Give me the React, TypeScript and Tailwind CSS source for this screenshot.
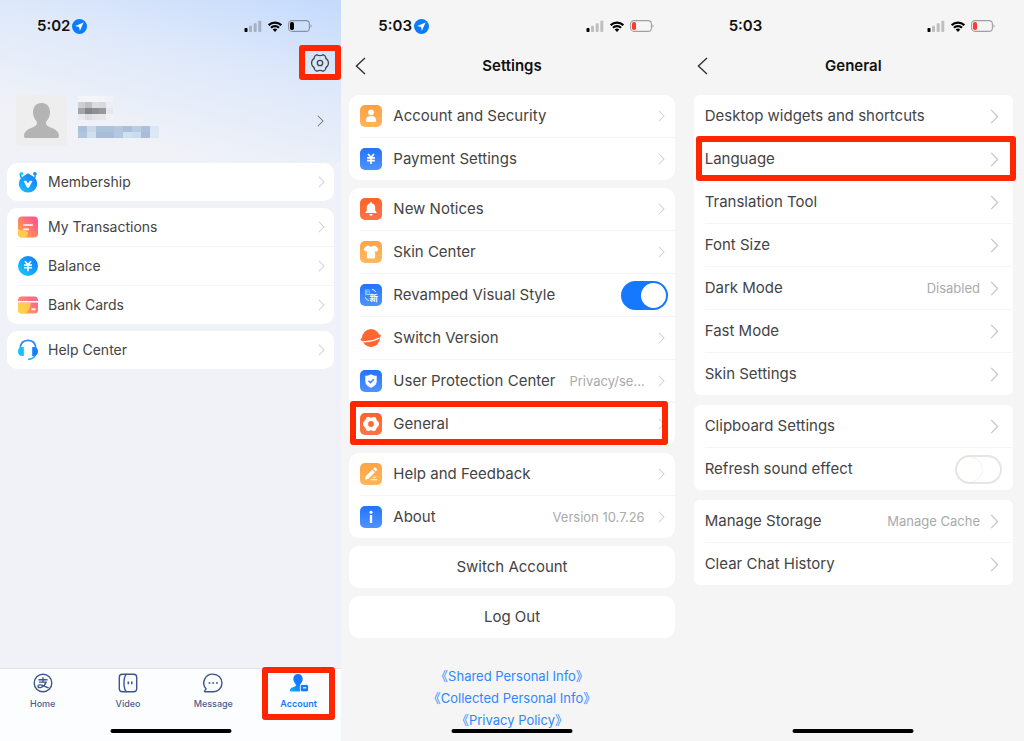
import React, { useState } from 'react';

type Status = { time: string; located?: boolean; low?: boolean };

const StatusBar = ({ time, located, low }: Status) => (
    <div className="flex items-center justify-between pt-4 pl-[37px] pr-[29px] h-9">
        <div className={`flex items-center gap-[2px] text-[15px] leading-5 font-semibold text-[#111] ${located ? '' : 'pl-[9px]'}`}>
            <span>{time}</span>
            {located && (
                <svg className="w-[15px] h-[15px]" viewBox="0 0 15 15">
                    <circle cx="7.5" cy="7.5" r="7.5" fill="#0a7cff" />
                    <path d="M11.6 3.5 3.2 7.1l3.8.9.9 3.8z" fill="#fff" />
                </svg>
            )}
        </div>
        <div className="flex items-center gap-[6px]">
            <svg className="w-[18px] h-3" viewBox="0 0 18 12">
                <rect x="0.5" y="8" width="3" height="4" rx="0.8" fill="#000" />
                <rect x="5" y="5.8" width="3" height="6.2" rx="0.8" fill="#000" opacity="0.22" />
                <rect x="9.7" y="3.2" width="3" height="8.8" rx="0.8" fill="#000" opacity="0.22" />
                <rect x="14.3" y="0.8" width="3" height="11.2" rx="0.8" fill="#000" opacity="0.22" />
            </svg>
            <svg className="w-[14px] h-[11px]" viewBox="0 0 14 11" fill="none" stroke="#000" strokeWidth="2.2">
                <path d="M0.7 4.1a9 9 0 0 1 12.6 0" />
                <path d="M3 6.8a5.6 5.6 0 0 1 8 0" />
                <path d="M7 11 4.7 8.600a3.200 3.200 0 0 1 4.600 0z" fill="#000" stroke="none" />
            </svg>
            <svg className="w-6 h-3" viewBox="0 0 24 12">
                <rect x="0.6" y="0.6" width="20.8" height="10.8" rx="3.4" fill="none" stroke="#000" strokeOpacity="0.35" strokeWidth="1.1" />
                <rect x="2" y="2" width="4" height="8" rx="1.8" fill={low ? '#ff3b30' : '#000'} />
                <path d="M22.6 4.2v3.6c1.2-.5 1.2-3.1 0-3.6z" fill="#000" opacity="0.4" />
            </svg>
        </div>
    </div>
);

const Arrow = ({ className }: { className: string }) => (
    <svg className={`shrink-0 ${className}`} viewBox="0 0 7 13" fill="none" stroke="currentColor" strokeWidth="1.1">
        <path d="M0.6 0.8 6.2 6.5 0.6 12.2" />
    </svg>
);

const Highlight = ({ className }: { className: string }) => (
    <span className={`absolute z-10 border-6 border-[#ff2600] rounded-[3px] pointer-events-none ${className}`} />
);

const HomeBar = () => (
    <div className="absolute bottom-2 left-1/2 -translate-x-1/2 w-[121px] h-1 rounded-full bg-black" />
);

const NavBar = ({ title }: { title: string }) => (
    <header className="grid grid-cols-[1fr_auto_1fr] items-center h-[59px] px-[14px]">
        <button aria-label="Back" className="justify-self-start">
            <svg className="w-[11px] h-[18px]" viewBox="0 0 11 18" fill="none" stroke="#333" strokeWidth="1.4">
                <path d="M10 1 1.4 9 10 17" />
            </svg>
        </button>
        <h1 className="text-[15px] leading-6 font-semibold text-[#111]">{title}</h1>
    </header>
);

const Tile = ({ from, to, children }: { from: string; to: string; children: React.ReactNode }) => {
    const id = React.useId();
    return (
        <svg className="w-[22px] h-[22px] shrink-0" viewBox="0 0 22 22">
            <defs>
                <linearGradient id={id} x1="0" y1="0" x2="0" y2="1">
                    <stop offset="0" stopColor={from} />
                    <stop offset="1" stopColor={to} />
                </linearGradient>
            </defs>
            <rect width="22" height="22" rx="5" fill={`url(#${id})`} />
            {children}
        </svg>
    );
};

const Yen = ({ x, y }: { x: number; y: number }) => (
    <path
        transform={`translate(${x} ${y})`}
        d="M-3-4.8 0-1.4 3-4.8M-3.9-.9h7.8M-3.9 1.8h7.8M0-1.4V5.2"
        fill="none"
        stroke="#fff"
        strokeWidth="1.6"
    />
);

const icons: Record<string, React.ReactNode> = {
    person: (
        <Tile from="#ffa043" to="#ffb65c">
            <circle cx="11" cy="7.3" r="2.9" fill="#fff" />
            <path d="M6 15.2c0-3 2.3-4.2 5-4.2s5 1.2 5 4.2c0 1.5-.8 1.8-1.8 1.8H7.8c-1 0-1.8-.3-1.8-1.8z" fill="#fff" />
        </Tile>
    ),
    yen: <Tile from="#2473ff" to="#4f93ff"><Yen x={11} y={10.8} /></Tile>,
    bell: (
        <Tile from="#ff6229" to="#ff7445">
            <path d="M11 4.3c.8 0 1.2.5 1.2 1.1 2 .5 3 2 3 4v3.300l1.500 1.800v.6H5.300v-.6l1.500-1.800V9.400c0-2 1-3.500 3-4 0-.6.400-1.100 1.200-1.100z" fill="#fff" />
            <path d="M9.300 16h3.400a1.700 1.700 0 0 1-3.400 0z" fill="#fff" />
        </Tile>
    ),
    shirt: (
        <Tile from="#ffa445" to="#ffb960">
            <path d="M8 4.600c1.200 1.500 4.800 1.500 6 0l2.400.8 2.200 3.400-2.300 2-1.200-.7v6.200c0 .7-.4 1.200-1.100 1.200H8c-.7 0-1.100-.5-1.100-1.200v-6.200l-1.200.7-2.300-2 2.200-3.400z" fill="#fff" />
        </Tile>
    ),
    revamp: (
        <Tile from="#2473ff" to="#4f93ff">
            <text x="4.600" y="9.600" fontSize="5.500" fill="#fff" fontFamily="Noto Sans CJK SC, sans-serif">旧</text>
            <text x="9.400" y="17" fontSize="8.500" fontWeight="700" fill="#fff" fontFamily="Noto Sans CJK SC, sans-serif">新</text>
            <path d="M12 5.500c1.800.2 3.200 1.200 3.800 2.600M5.400 13.400c.5 1.600 1.700 2.700 3.400 3" fill="none" stroke="#fff" />
        </Tile>
    ),
    planet: (
        <svg className="w-[22px] h-[22px] shrink-0" viewBox="0 0 22 22">
            <circle cx="11" cy="11" r="9" fill="#ff6632" />
            <path d="M2 12.600 20.400 7.400c1 .9.300 2.300-1.200 3.100-4 2.400-11.500 4.400-16.400 3.600-2-.3-2.700-1-2-2.300.4-.7 1-1.300 2-1.900z" fill="#ff6632" />
            <path d="M3.500 14.600c5.500.4 11-1 15.800-3.600" fill="none" stroke="#fff" strokeWidth="1.200" />
        </svg>
    ),
    shield: (
        <Tile from="#2473ff" to="#4f93ff">
            <path d="M11 4.200c2 1.100 3.700 1.500 5.700 1.600v5.700c0 3-2.500 4.800-5.700 6.200-3.200-1.400-5.700-3.200-5.700-6.200V5.800C7.300 5.700 9 5.300 11 4.200z" fill="#fff" />
            <path d="m8.500 10.700 2 1.900 3.300-3.400" fill="none" stroke="#3a82ff" strokeWidth="1.500" />
        </Tile>
    ),
    gear: (
        <Tile from="#ff6229" to="#ff7445">
            <path d="M7.500 4.100h1.600q1.900 1.100 3.800 0h1.600q1.300.4 1.700 1.600.1 1.700 1.700 2.500 1.100 1.300 1.100 2.800t-1.100 2.800q-1.600.8-1.700 2.500-.4 1.200-1.700 1.600h-1.600q-1.900-1.100-3.800 0H7.500q-1.300-.4-1.700-1.600-.1-1.700-1.700-2.500Q3 12.500 3 11t1.100-2.800q1.600-.8 1.700-2.500.4-1.200 1.700-1.600z" fill="#fff" />
            <circle cx="11" cy="11" r="2.900" fill="#ff6b38" />
        </Tile>
    ),
    pen: (
        <Tile from="#ffa445" to="#ffb65c">
            <path d="m5 16.800.9-3.700 6.400-6.400 2.600 2.600-6.400 6.500z" fill="#fff" />
            <path d="m13.200 5.800.8-.8c.7-.6 1.300-.6 1.900 0l.7.7c.6.6.6 1.300 0 1.900l-.8.800z" fill="#fff" />
            <path d="M12.800 14.200h3.300M10.700 16.700h6.200" stroke="#fff" strokeWidth="1.100" />
        </Tile>
    ),
    info: (
        <Tile from="#2473ff" to="#4f93ff">
            <circle cx="11" cy="6.300" r="1.500" fill="#fff" />
            <path d="M11 9v8" stroke="#fff" strokeWidth="2.300" />
        </Tile>
    ),
    member: (
        <svg className="w-5 h-[22px] shrink-0" viewBox="0 0 20 22">
            <defs>
                <linearGradient id="member" x1="0" y1="1" x2="1" y2="0">
                    <stop offset="0" stopColor="#16c4fd" />
                    <stop offset="1" stopColor="#1776ff" />
                </linearGradient>
            </defs>
            <path d="m10 2.300 4.800 3a9 9 0 0 1 4.400 7.600 9.200 8.700 0 0 1-18.400 0 9 9 0 0 1 4.400-7.600z" fill="url(#member)" />
            <path d="M3.200 7C3 5.200 2.600 4 2 2.600M16.800 7c.2-1.800.6-3 1.200-4.400" stroke="#16a4fe" strokeWidth="1.600" fill="none" />
            <ellipse cx="3.600" cy="2.500" rx="1.700" ry="1.500" fill="#12d4f6" />
            <ellipse cx="16.800" cy="2.500" rx="1.700" ry="1.500" fill="#1f80ff" />
            <path d="m5.600 10 2.600-.2 1.800 2.600 1.800-2.600 2.600.2-3.200 6.300c-.6 1-1.800 1-2.400 0z" fill="#fff" />
        </svg>
    ),
    transactions: (
        <svg className="w-5 h-[22px] shrink-0" viewBox="0 0 20 22">
            <defs>
                <linearGradient id="bill" x1="0" y1="1" x2="1" y2="0">
                    <stop offset="0.1" stopColor="#ffa63f" />
                    <stop offset="0.8" stopColor="#ff5c88" />
                </linearGradient>
            </defs>
            <rect x="0" y="0.500" width="20" height="21" rx="4" fill="url(#bill)" />
            <path d="M0 13c3.500 2 7 1 10 3 .5 2-1 4.500-3 5.500H4a4 4 0 0 1-4-4z" fill="#ffd84a" opacity="0.8" />
            <path d="M5.300 9h9.500M5.300 13.300h5.600" stroke="#fff" strokeWidth="1.700" />
        </svg>
    ),
    balance: (
        <svg className="w-5 h-[22px] shrink-0" viewBox="0 0 20 20">
            <defs>
                <linearGradient id="balance" x1="0" y1="1" x2="1" y2="0">
                    <stop offset="0" stopColor="#12d3fc" />
                    <stop offset="1" stopColor="#1671ff" />
                </linearGradient>
            </defs>
            <circle cx="10" cy="10" r="10" fill="url(#balance)" />
            <Yen x={10} y={10} />
        </svg>
    ),
    cards: (
        <svg className="w-5 h-5 shrink-0" viewBox="0 0 20 20">
            <defs>
                <linearGradient id="cards" x1="0" y1="1" x2="1" y2="0">
                    <stop offset="0.1" stopColor="#ffb13f" />
                    <stop offset="0.7" stopColor="#ff6c83" />
                </linearGradient>
            </defs>
            <rect x="0" y="1.500" width="20" height="17" rx="3.500" fill="url(#cards)" />
            <path d="M0 8h13c-1 4-2 8-6 10.500H3.500A3.500 3.500 0 0 1 0 15z" fill="#ffdf4c" opacity="0.75" />
            <path d="M0 6.800h20" stroke="#fff" strokeWidth="1.500" />
            <path d="M13.500 14.300h4" stroke="#fff" strokeWidth="1.800" />
        </svg>
    ),
    help: (
        <svg className="w-5 h-[22px] shrink-0" viewBox="0 0 20 22">
            <path d="M2 11C2 5 5 1.400 10 1.400S18 5 18 11" fill="none" stroke="#2b8cff" strokeWidth="1.700" />
            <path d="M17.300 15.500c-.8 3-3.400 4.500-6.600 4.800" fill="none" stroke="#1cbafd" strokeWidth="1.700" strokeLinecap="round" />
            <path d="M5.800 8.200v8.700c-3.500.6-5.800-1-5.800-4.300s2.300-5 5.800-4.400z" fill="#14bffd" />
            <path d="M14.200 8.200v8.700c3.500.6 5.800-1 5.800-4.300s-2.300-5-5.800-4.400z" fill="#1a7dff" />
        </svg>
    ),
};

type Item = {
    label: string;
    icon?: string;
    value?: string;
    toggle?: boolean;
    highlight?: string;
};

type Variant = 'account' | 'settings' | 'general';

const Toggle = ({ id, on }: { id: string; on: boolean }) => {
    const [checked, setChecked] = useState(on);
    return (
        <input
            id={id}
            type="checkbox"
            role="switch"
            checked={checked}
            onChange={() => setChecked(!checked)}
            className="relative appearance-none shrink-0 w-[47px] h-[29px] -mr-[3px] rounded-full border-2 border-[#e6e6e6] bg-white checked:bg-[#1677ff] checked:border-[#1677ff] before:absolute before:top-0 before:left-0 before:w-[25px] before:h-[25px] before:rounded-full before:bg-[#fffffd] before:shadow-[0_0_1px_#ccc] checked:before:left-[18px] checked:before:shadow-none"
        />
    );
};

const Row = ({ item, variant }: { item: Item; variant: Variant }) => {
    const { label, icon, value, toggle, highlight } = item;
    const sizes = {
        account: 'h-[38px] pr-[9px] text-[14px]',
        settings: 'h-[42px] pr-[10px] text-[15px]',
        general: 'h-[42px] pr-[14px] text-[15px]',
    };
    const base = `flex items-center w-full text-left leading-5 text-[#444] ${sizes[variant]}`;

    if (toggle !== undefined) {
        const id = label.replace(/ /g, '-').toLowerCase();
        return (
            <div className={base}>
                {icon && <span className="mr-[11px]">{icons[icon]}</span>}
                <label htmlFor={id} className="flex-1">{label}</label>
                <Toggle id={id} on={toggle} />
            </div>
        );
    }

    return (
        <button className={base}>
            {icon && <span className={variant === 'account' ? 'mr-[10px]' : 'mr-[11px]'}>{icons[icon]}</span>}
            <span className="flex-1 whitespace-nowrap">{label}</span>
            {value && (
                <span className={`text-[13px] text-[#aaa] ${variant === 'general' ? 'mr-[10px]' : 'mr-[13px]'}`}>{value}</span>
            )}
            <Arrow className={variant === 'general' ? 'w-[9px] h-[15px] text-[#c8c8c8]' : 'w-[7px] h-[12px] text-[#cfcfcf]'} />
            {highlight && <Highlight className={highlight} />}
        </button>
    );
};

const Card = ({ items, variant }: { items: Item[]; variant: Variant }) => (
    <ul className={`bg-white pl-[11px] divide-y divide-[#f5f5f5] ${variant === 'general' ? 'rounded-md' : 'rounded-[10px]'}`}>
        {items.map((item) => (
            <li key={item.label} className={item.highlight ? 'relative' : ''}>
                <Row item={item} variant={variant} />
            </li>
        ))}
    </ul>
);

const accountGroups: Item[][] = [
    [{ label: 'Membership', icon: 'member' }],
    [
        { label: 'My Transactions', icon: 'transactions' },
        { label: 'Balance', icon: 'balance' },
        { label: 'Bank Cards', icon: 'cards' },
    ],
    [{ label: 'Help Center', icon: 'help' }],
];

const settingsGroups: Item[][] = [
    [
        { label: 'Account and Security', icon: 'person' },
        { label: 'Payment Settings', icon: 'yen' },
    ],
    [
        { label: 'New Notices', icon: 'bell' },
        { label: 'Skin Center', icon: 'shirt' },
        { label: 'Revamped Visual Style', icon: 'revamp', toggle: true },
        { label: 'Switch Version', icon: 'planet' },
        { label: 'User Protection Center', icon: 'shield', value: 'Privacy/se...' },
        { label: 'General', icon: 'gear', highlight: '-top-[2px] bottom-0 -left-[10px] right-[7px]' },
    ],
    [
        { label: 'Help and Feedback', icon: 'pen' },
        { label: 'About', icon: 'info', value: 'Version 10.7.26' },
    ],
];

const generalGroups: Item[][] = [
    [
        { label: 'Desktop widgets and shortcuts' },
        { label: 'Language', highlight: '-top-[2px] -bottom-px -left-[9px] -right-[3px]' },
        { label: 'Translation Tool' },
        { label: 'Font Size' },
        { label: 'Dark Mode', value: 'Disabled' },
        { label: 'Fast Mode' },
        { label: 'Skin Settings' },
    ],
    [{ label: 'Clipboard Settings' }, { label: 'Refresh sound effect', toggle: false }],
    [{ label: 'Manage Storage', value: 'Manage Cache' }, { label: 'Clear Chat History' }],
];

// Pixelated name and phone number
const nameRows = [
    ['#f3f5f9', '#f3f5f9', '#f3f5f9', '#f1f4f9', '#eef2f9'],
    ['#cfd0d4', '#bfc0c4', '#dcdde1', '#d8d9dd', '#eceef2'],
    ['#a5a5a8', '#858588', '#909093', '#98989b', '#e6e8ed'],
    ['#e9eaee', '#dcdde1', '#e4e5e9', '#e6e7eb', '#f0f2f7'],
];
const phoneRows = [
    ['#adc0da', '#c9d9e9', '#adc2dc', '#adc2dc', '#b4c7de', '#a9bfda', '#b9cce2', '#adc0da', '#dbe8f4'],
    ['#b0c4dd', '#d0dfec', '#a9bdd8', '#a9bdd8', '#b4c8df', '#cfe0ef', '#c9dcec', '#a9bdd8', '#dce9f5'],
];

const Mosaic = ({ rows, cell }: { rows: string[][]; cell: string }) => (
    <div>
        {rows.map((row, r) => (
            <div key={r} className="flex">
                {row.map((color, c) => (
                    <span key={c} className={cell} style={{ backgroundColor: color }} />
                ))}
            </div>
        ))}
    </div>
);

const tabs = [
    {
        label: 'Home',
        icon: (
            <svg className="w-5 h-5" viewBox="0 0 20 20" fill="none" stroke="#3d5590" strokeWidth="1.4">
                <circle cx="10" cy="10" r="8.800" />
                <path d="M5.500 6.700h9M10 4.200v4.600M6 9.100h7.200c-.8 2.300-2.500 4.400-5 5.300-2.200.7-3.400-.2-3.200-1.300.3-1.400 2.600-1.600 4.700-.7 1.800.7 3.500 1.600 6 2.500" />
            </svg>
        ),
    },
    {
        label: 'Video',
        icon: (
            <svg className="w-5 h-5" viewBox="0 0 20 20" fill="none" stroke="#3d5590" strokeWidth="1.4">
                <path d="M8.500 1.200H4.300A3 3 0 0 0 1.300 4.200v11.600a3 3 0 0 0 3 3h4.200" />
                <path d="M8.500 1.200h7.200a3 3 0 0 1 3 3v11.600a3 3 0 0 1-3 3H8.500c-1.700-1.300-2.500-4.500-2.500-8.800s.8-7.500 2.500-8.800z" />
                <path d="M10.300 8.500v2.700M13.800 8.500v2.700" strokeWidth="1.500" />
            </svg>
        ),
    },
    {
        label: 'Message',
        icon: (
            <svg className="w-5 h-5" viewBox="0 0 20 20" fill="none" stroke="#3d5590" strokeWidth="1.4">
                <path d="M10.200 1.200a8.800 8.800 0 1 1 0 17.600H2.300c-.8 0-1-.6-.5-1.200l1.300-1.700A8.800 8.800 0 0 1 10.200 1.200z" />
                <path d="M5.600 10h1.800M9.300 10h1.800M13 10h1.800" strokeWidth="1.700" />
            </svg>
        ),
    },
    {
        label: 'Account',
        active: true,
        icon: (
            <svg className="w-5 h-5" viewBox="0 0 20 20">
                <defs>
                    <linearGradient id="me" x1="0" y1="1" x2="1" y2="0">
                        <stop offset="0" stopColor="#0cb2ff" />
                        <stop offset="0.6" stopColor="#1677ff" />
                    </linearGradient>
                </defs>
                <path d="M9 1c3 0 4.700 2.100 4.700 5 0 2.100-1 3.800-2.200 5-.3 1.600 0 2.200-.5 3V18.500H2.200c-1.500 0-1.800-1.200-1-2.500 1.200-1.900 5.300-2.300 5.600-3.300.1-.7 0-1.100-.3-1.700C5.300 9.800 4.300 8.100 4.300 6 4.300 3.100 6 1 9 1z" fill="url(#me)" />
                <rect x="11.300" y="11.500" width="8.200" height="7.300" rx="1.800" fill="#1677ff" stroke="#fff" strokeWidth="0.8" />
                <path d="M14 14.800h3.200" stroke="#fff" strokeWidth="1.200" />
            </svg>
        ),
    },
];

const AccountScreen = () => (
    <section className="relative flex flex-col min-h-screen bg-[#f0f2f7]">
        <div className="bg-[linear-gradient(195deg,#c4dafc_0%,#dfe9fa_38%,#f0f2f7_78%)]">
            <StatusBar time="5:02" located />
            <div className="flex justify-end pt-[9px]">
                <button aria-label="Settings" className="relative flex items-center justify-center w-[42px] h-[35px]">
                    <svg className="w-[18px] h-[18px]" viewBox="0 0 18 18" fill="none" stroke="#444" strokeWidth="1.3">
                        <path d="M5.300 1h1.200q2.500 1.400 5 0h1.200q1.300.4 1.700 1.600.1 2.200 2.100 3.300Q17.400 7.300 17.400 9t-.9 3.100q-2 1.100-2.100 3.300-.4 1.200-1.700 1.600h-1.200q-2.500-1.400-5 0H5.300q-1.300-.4-1.700-1.600-.1-2.200-2.100-3.300Q.6 10.700.6 9t.9-3.100q2-1.100 2.100-3.300.4-1.200 1.700-1.600z" />
                        <circle cx="9" cy="9" r="2.700" />
                    </svg>
                    <Highlight className="inset-0" />
                </button>
            </div>
            <button aria-label="Profile" className="flex items-center w-full pt-[15px] pl-4 pr-[17px] pb-[17px]">
                <svg className="w-[51px] h-[51px]" viewBox="0 0 51 51">
                    <rect width="51" height="51" rx="4" fill="#eee" />
                    <path d="M25.500 8c5.500 0 8.500 4 8.500 9.300 0 3.700-1.500 7-3.700 9.200-.8 3 .5 4.200 3.200 5.400 4.800 2 9.500 3.600 9.500 9.300 0 1.200-.8 1.800-2 1.800H10c-1.200 0-2-.6-2-1.800 0-5.700 4.700-7.300 9.500-9.300 2.700-1.200 4-2.400 3.200-5.400-2.200-2.200-3.700-5.500-3.700-9.200C17 12 20 8 25.500 8z" fill="#b4b4b4" />
                </svg>
                <div className="flex-1 flex flex-col gap-[6px] pl-[11px] pb-2">
                    <Mosaic rows={nameRows} cell="w-[7px] h-[6px]" />
                    <Mosaic rows={phoneRows} cell="w-[9px] h-[6px]" />
                </div>
                <Arrow className="w-[7px] h-[12px] text-[#777]" />
            </button>
        </div>
        <main className="flex flex-col gap-[7px] px-[7px]">
            {accountGroups.map((items) => (
                <Card key={items[0].label} items={items} variant="account" />
            ))}
        </main>
        <nav className="grid grid-cols-4 mt-auto h-[73px] border-t border-[#e2e4e9] bg-[#fcfdff]">
            {tabs.map((tab) => (
                <a
                    key={tab.label}
                    href="#"
                    className={`relative flex flex-col items-center gap-[5px] pt-1 text-[9px] leading-3 ${tab.active ? 'font-semibold text-[#1677ff]' : 'font-medium text-[#4a5f93]'}`}
                >
                    {tab.icon}
                    {tab.label}
                    {tab.active && <Highlight className="-top-[2px] left-[6px] right-[6px] h-[53px]" />}
                </a>
            ))}
        </nav>
        <HomeBar />
    </section>
);

const SettingsScreen = () => (
    <section className="relative min-h-screen bg-[#f5f5f5]">
        <StatusBar time="5:03" located low />
        <NavBar title="Settings" />
        <main className="flex flex-col gap-2 px-2">
            {settingsGroups.map((items) => (
                <Card key={items[0].label} items={items} variant="settings" />
            ))}
            {['Switch Account', 'Log Out'].map((label) => (
                <button key={label} className="h-[42px] rounded-[10px] bg-white text-[15px] leading-5 text-[#444]">
                    {label}
                </button>
            ))}
        </main>
        <footer className="flex flex-col items-center pt-[27px] text-[13px] leading-[22px] text-[#2f87ff]">
            <a href="#">《Shared Personal Info》</a>
            <a href="#">《Collected Personal Info》</a>
            <a href="#">《Privacy Policy》</a>
        </footer>
        <HomeBar />
    </section>
);

const GeneralScreen = () => (
    <section className="relative min-h-screen bg-[#f5f5f5]">
        <StatusBar time="5:03" low />
        <NavBar title="General" />
        <main className="flex flex-col gap-[10px] px-[11px]">
            {generalGroups.map((items) => (
                <Card key={items[0].label} items={items} variant="general" />
            ))}
        </main>
        <HomeBar />
    </section>
);

export default function App() {
    return (
        <div className="grid grid-cols-3 bg-white font-[Inter,'Noto_Sans_CJK_SC',sans-serif]">
            <AccountScreen />
            <SettingsScreen />
            <GeneralScreen />
        </div>
    );
}
